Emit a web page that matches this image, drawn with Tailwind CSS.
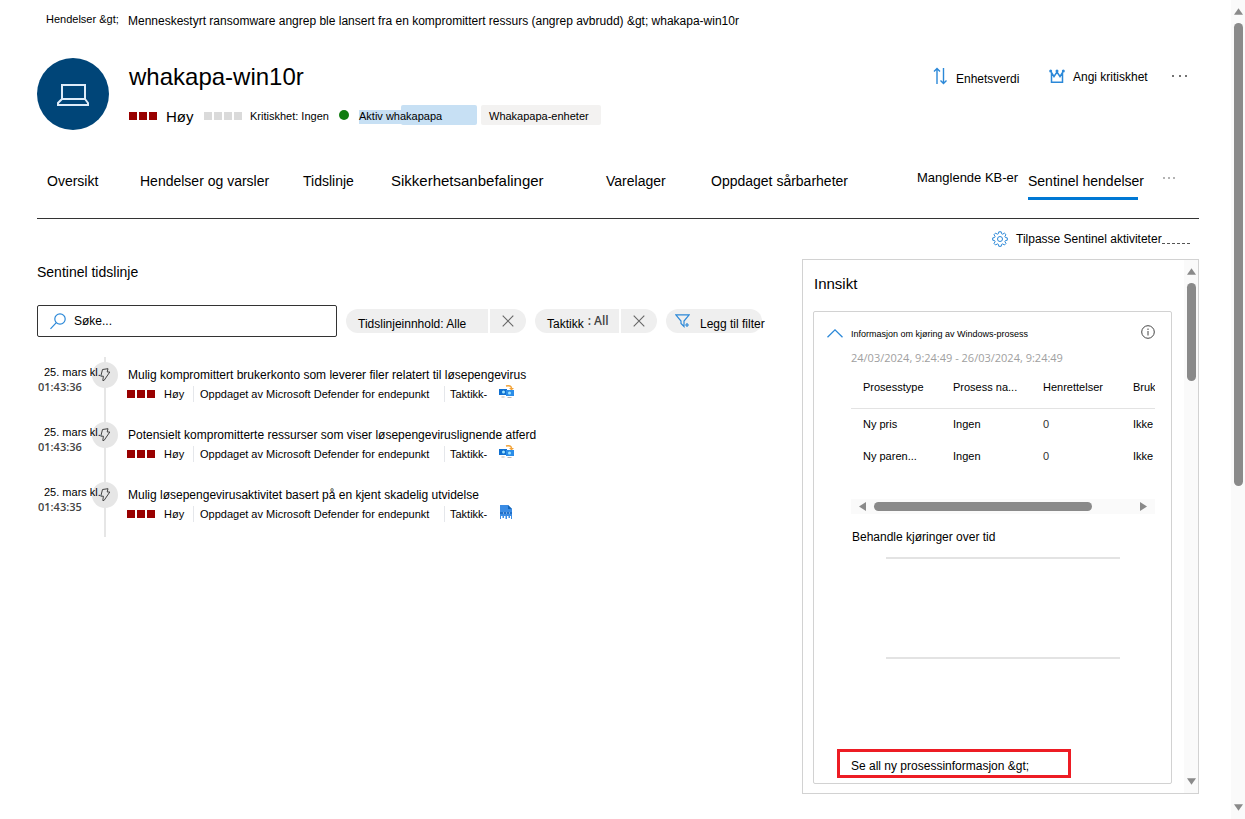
<!DOCTYPE html>
<html lang="nb">
<head>
<meta charset="utf-8">
<meta name="viewport" content="width=device-width, initial-scale=1">
<title>whakapa-win10r</title>
<script src="https://cdn.jsdelivr.net/npm/@tailwindcss/browser@4"></script>
</head>
<body class="min-h-screen flex bg-white text-black text-[12px] leading-4 font-['Liberation_Sans',Arial,sans-serif] whitespace-nowrap">
<svg class="hidden" aria-hidden="true">
  <symbol id="bolt" viewBox="0 0 12 16"><path d="M3.500 2.500l5.500-.8-.8 3.300h2.600L5 13.500H3.800l.6-4.300H1.800z" fill="none" stroke="#444" stroke-linejoin="round"/></symbol>
  <symbol id="close" viewBox="0 0 12 12"><path d="M.7.7l10.600 10.600M11.300.7L.7 11.300" stroke="#666" stroke-width="1.100"/></symbol>
  <symbol id="lateral" viewBox="0 0 16 16"><path d="M7 2q5-1 5.500 2" fill="none" stroke="#f2a33a" stroke-width="1.500"/><path d="M10 4h5l-2.500 2.500z" fill="#f2a33a"/><path d="M0 5h8v6H0z" fill="#0f6fd0"/><path d="M7 6h8v6H7z" fill="#2b8de8"/><circle cx="4.500" cy="8" r="1.500" fill="#9fe4ff"/><circle cx="10.500" cy="9" r="1.500" fill="#9fe4ff"/><path d="M2.500 12.500h3v1h-3zM8.500 13h4v1h-4z" fill="#b5b5b5"/></symbol>
  <symbol id="impact" viewBox="0 0 14 14"><path d="M1 0h8l4 4v10h-1v-3h-1v2H9.500v-2H8v3H6.500v-3H5v2H3.500v-2H2v3H1z" fill="#3b8ce4"/><path d="M9 0l4 4H9z" fill="#1566b8"/><path d="M1 8h12" stroke="#1f6fc9" stroke-width="2"/><path d="M4 8h1M7 8h1M10 8h1" stroke="#d4e8fb"/></symbol>
</svg>

<div class="flex-1 min-w-0 pl-[37px] pr-8">
  <nav aria-label="Navigasjonssti" class="flex pt-[11px] pl-[9px]">
    <a href="#" class="w-[82px] text-[11px]">Hendelser &amp;gt;</a>
    <a href="#" class="pt-0.5">Menneskestyrt ransomware angrep ble lansert fra en kompromittert ressurs (angrep avbrudd) &amp;gt; whakapa-win10r</a>
  </nav>

  <header class="mt-[29px] flex gap-5">
    <div class="size-[72px] rounded-full bg-[#004578] grid place-items-center">
      <svg width="34" height="24" viewBox="0 0 34 24" fill="none" stroke="#deecf9" stroke-width="2"><path d="M6 3h23v14H6zM6 17l-4 4v2h30v-2l-3-4"/></svg>
    </div>
    <div class="flex-1">
      <h1 class="text-[24px] leading-8 mt-[3px]">whakapa-win10r</h1>
      <div class="mt-[13px] flex items-center h-5 text-[11px]">
        <span class="flex gap-0.5"><i class="size-2 bg-[#990000]"></i><i class="size-2 bg-[#990000]"></i><i class="size-2 bg-[#990000]"></i></span>
        <span class="text-[15px] ml-[9px] w-[38px] pt-0.5">Høy</span>
        <span class="flex gap-0.5"><i class="size-2 bg-[#dadada]"></i><i class="size-2 bg-[#dadada]"></i><i class="size-2 bg-[#dadada]"></i><i class="size-2 bg-[#dadada]"></i></span>
        <span class="ml-2 w-[89px]">Kritiskhet: Ingen</span>
        <i class="-mt-0.5 size-2.5 rounded-full bg-[#107c10]"></i>
        <span class="relative -mt-0.5 ml-[10px] w-[118px] h-5 flex items-center">
          <i class="absolute left-0 top-[5px] w-11 h-[14px] bg-[#c7e0f4]"></i>
          <i class="absolute right-0 top-0 w-[76px] h-5 rounded-xs bg-[#c7e0f4]"></i>
          <span class="relative pt-0.5">Aktiv whakapapa</span>
        </span>
        <span class="-mt-0.5 ml-1 h-5 w-[120px] pl-2 pt-0.5 rounded-xs bg-[#f3f2f1] flex items-center">Whakapapa-enheter</span>
      </div>
    </div>
    <div class="flex items-start pt-[9px] pr-[10px] h-10">
      <button type="button" class="flex items-start gap-[9px]">
        <svg width="14" height="18" viewBox="0 0 14 18" fill="none" stroke="#2b88d8" stroke-width="1.400"><path d="M4 17V2M1 4.500L4 1.500l3 3M10.500 1v15M7.500 13.500l3 3 3-3"/></svg>
        <span class="pt-1 w-[93px] text-left">Enhetsverdi</span>
      </button>
      <button type="button" class="flex items-start gap-2">
        <svg class="mt-0.5" width="16" height="15" viewBox="0 0 16 15" fill="none" stroke="#2b88d8" stroke-width="1.500"><path d="M2.500 13.200V3.500L5 7.500 8 3l3 4.500 2.500-4v9.700z"/><g fill="#2b88d8" stroke="none"><circle cx="1.700" cy="2" r="1.500"/><circle cx="8" cy="2" r="1.500"/><circle cx="14.300" cy="2" r="1.500"/></g></svg>
        <span class="pt-0.5 w-[98px] text-left">Angi kritiskhet</span>
      </button>
      <button type="button" aria-label="Flere handlinger" class="pt-[7px]"><svg width="18" height="4" viewBox="0 0 18 4" fill="#444"><circle cx="2" cy="2" r="1"/><circle cx="9" cy="2" r="1"/><circle cx="15" cy="2" r="1"/></svg></button>
    </div>
  </header>

  <nav aria-label="Faner" class="mt-[41px] pl-[10px] h-12 border-b border-[#333] grid grid-cols-[93fr_163fr_88fr_215fr_105fr_206fr_111fr_134fr_37fr] text-[14px] leading-5">
    <a href="#">Oversikt</a>
    <a href="#">Hendelser og varsler</a>
    <a href="#">Tidslinje</a>
    <a href="#" class="text-[15px]">Sikkerhetsanbefalinger</a>
    <a href="#">Varelager</a>
    <a href="#">Oppdaget sårbarheter</a>
    <a href="#" class="text-[13px] -mt-[3px]">Manglende KB-er</a>
    <a href="#" aria-current="page" class="h-[29px] w-[110px] border-b-3 border-[#0078d4]">Sentinel hendelser</a>
    <button type="button" aria-label="Flere faner" class="self-start pt-[5px]"><svg width="14" height="4" viewBox="0 0 14 4" fill="#555"><circle cx="2" cy="2" r=".8"/><circle cx="7" cy="2" r=".8"/><circle cx="12" cy="2" r=".8"/></svg></button>
  </nav>

  <div class="h-10 flex items-center justify-end">
    <button type="button" class="flex items-center w-[207px]">
      <svg class="mr-2" width="16" height="16" viewBox="0 0 16 16" fill="none" stroke="#2b88d8"><path d="M6.800.8h2.400l.4 1.900 1.100.5 1.700-1.100 1.600 1.600-1.100 1.700.5 1.100 1.900.4v2.300l-1.900.4-.5 1.100 1.100 1.700-1.600 1.600-1.700-1.100-1.100.5-.4 1.900H6.800l-.4-1.900-1.100-.5-1.700 1.100L2 12.400l1.100-1.700-.5-1.100-1.900-.4V6.900l1.900-.4.5-1.100L2 3.700l1.600-1.600 1.700 1.100 1.100-.5z"/><circle cx="8" cy="8" r="2.500"/></svg>
      <span>Tilpasse Sentinel aktiviteter</span>
      <i class="h-[10px] w-7 border-b border-dashed border-[#555]"></i>
    </button>
  </div>

  <main class="flex items-start">
    <section class="flex-1 min-w-0 pt-[3px]">
      <h2 class="text-[14px] leading-5">Sentinel tidslinje</h2>
      <div class="mt-[23px] flex items-center">
        <label class="w-[300px] h-8 border border-[#333] rounded-xs flex items-center pl-3 gap-2">
          <svg width="16" height="17" viewBox="0 0 16 17" fill="none" stroke="#2b88d8" stroke-width="1.200"><circle cx="10" cy="6" r="5.200"/><path d="M6.300 9.700L.5 15.800"/></svg>
          <input type="text" aria-label="Søk" placeholder="Søke..." class="flex-1 min-w-0 outline-none placeholder:text-black">
        </label>
        <div class="ml-[9px] flex gap-0.5 h-6">
          <button type="button" class="w-[142px] pl-3 pt-1.5 text-left rounded-l-full rounded-r-xs bg-[#efefef]">Tidslinjeinnhold: Alle</button>
          <button type="button" aria-label="Fjern Tidslinjeinnhold" class="w-9 grid place-items-center rounded-r-full bg-[#efefef]"><svg width="12" height="12"><use href="#close"/></svg></button>
        </div>
        <div class="ml-[9px] flex gap-0.5 h-6">
          <button type="button" class="w-[84px] pl-3 flex gap-1 rounded-l-full rounded-r-xs bg-[#efefef]"><span class="pt-[7px]">Taktikk</span><span class="pt-1 font-['Open_Sans',sans-serif] font-semibold text-[#444]">: All</span></button>
          <button type="button" aria-label="Fjern Taktikk" class="w-9 grid place-items-center rounded-r-full bg-[#efefef]"><svg width="12" height="12"><use href="#close"/></svg></button>
        </div>
        <button type="button" class="ml-[9px] h-6 w-[96px] pl-[9px] flex items-center gap-2.5 rounded-full bg-[#efefef]">
          <svg class="shrink-0" width="15" height="14" viewBox="0 0 15 14" fill="none" stroke="#2b88d8" stroke-width="1.200"><path d="M.8.8h13.400L9 7v5.500L6 9.500V7z"/><path d="M10 11h4M12 9v4"/></svg>
          <span class="pt-1.5">Legg til filter</span>
        </button>
      </div>

      <ol class="mt-5">
        <li class="flex h-[60px]">
          <div class="relative z-10 w-[54px] pt-[7px] text-[11px]"><span class="block pl-[7px]">25. mars kl.</span><span class="block -mt-px pl-px font-semibold text-[#444] font-['Open_Sans',sans-serif]">01:43:36</span></div>
          <div class="w-[37px] flex"><div class="ml-[13px] w-0.5 bg-[#e6e6e6] flex justify-center"><span class="mt-[5px] size-[26px] shrink-0 rounded-full bg-[#e6e6e6] grid place-items-center"><svg width="12" height="16"><use href="#bolt"/></svg></span></div></div>
          <div class="pt-[10px]">
            <a href="#" class="block">Mulig kompromittert brukerkonto som leverer filer relatert til løsepengevirus</a>
            <div class="flex items-center mt-[3px] text-[11px]"><span class="flex gap-0.5 -ml-px"><i class="size-2 bg-[#990000]"></i><i class="size-2 bg-[#990000]"></i><i class="size-2 bg-[#990000]"></i></span><span class="ml-[9px] w-[29px]">Høy</span><span class="w-[251px] pl-1.5 border-l border-gray-200">Oppdaget av Microsoft Defender for endepunkt</span><span class="w-[55px] pl-[5px] border-l border-gray-200">Taktikk-</span><svg class="-mt-1" width="16" height="16"><use href="#lateral"/></svg></div>
          </div>
        </li>
        <li class="flex h-[60px]">
          <div class="relative z-10 w-[54px] pt-[7px] text-[11px]"><span class="block pl-[7px]">25. mars kl.</span><span class="block -mt-px pl-px font-semibold text-[#444] font-['Open_Sans',sans-serif]">01:43:36</span></div>
          <div class="w-[37px] flex"><div class="ml-[13px] w-0.5 bg-[#e6e6e6] flex justify-center"><span class="mt-[5px] size-[26px] shrink-0 rounded-full bg-[#e6e6e6] grid place-items-center"><svg width="12" height="16"><use href="#bolt"/></svg></span></div></div>
          <div class="pt-[10px]">
            <a href="#" class="block">Potensielt kompromitterte ressurser som viser løsepengeviruslignende atferd</a>
            <div class="flex items-center mt-[3px] text-[11px]"><span class="flex gap-0.5 -ml-px"><i class="size-2 bg-[#990000]"></i><i class="size-2 bg-[#990000]"></i><i class="size-2 bg-[#990000]"></i></span><span class="ml-[9px] w-[29px]">Høy</span><span class="w-[251px] pl-1.5 border-l border-gray-200">Oppdaget av Microsoft Defender for endepunkt</span><span class="w-[55px] pl-[5px] border-l border-gray-200">Taktikk-</span><svg class="-mt-1" width="16" height="16"><use href="#lateral"/></svg></div>
          </div>
        </li>
        <li class="flex h-[60px]">
          <div class="relative z-10 w-[54px] pt-[7px] text-[11px]"><span class="block pl-[7px]">25. mars kl.</span><span class="block -mt-px pl-px font-semibold text-[#444] font-['Open_Sans',sans-serif]">01:43:35</span></div>
          <div class="w-[37px] flex"><div class="ml-[13px] w-0.5 bg-[#e6e6e6] flex justify-center"><span class="mt-[5px] size-[26px] shrink-0 rounded-full bg-[#e6e6e6] grid place-items-center"><svg width="12" height="16"><use href="#bolt"/></svg></span></div></div>
          <div class="pt-[10px]">
            <a href="#" class="block">Mulig løsepengevirusaktivitet basert på en kjent skadelig utvidelse</a>
            <div class="flex items-center mt-[3px] text-[11px]"><span class="flex gap-0.5 -ml-px"><i class="size-2 bg-[#990000]"></i><i class="size-2 bg-[#990000]"></i><i class="size-2 bg-[#990000]"></i></span><span class="ml-[9px] w-[29px]">Høy</span><span class="w-[251px] pl-1.5 border-l border-gray-200">Oppdaget av Microsoft Defender for endepunkt</span><span class="w-[55px] pl-[5px] border-l border-gray-200">Taktikk-</span><svg class="-mt-1" width="14" height="14"><use href="#impact"/></svg></div>
          </div>
        </li>
      </ol>
    </section>

    <aside class="w-[397px] shrink-0 border border-[#d2d2d2] flex">
      <div class="flex-1 min-w-0 pl-[10px] pr-3 pb-[9px]">
        <h2 class="mt-[14px] text-[15px] leading-5 pl-px">Innsikt</h2>
        <section class="mt-[17px] border border-[#d2d2d2] rounded-xs pt-[13px] px-[13px] pb-[5px]">
          <div class="flex items-start">
            <button type="button" aria-label="Skjul" class="pt-1 w-6"><svg width="16" height="9" viewBox="0 0 16 9" fill="none" stroke="#2b88d8" stroke-width="1.300"><path d="M.5 8.300L8 .9l7.500 7.400"/></svg></button>
            <h3 class="flex-1 pt-px text-[9px]">Informasjon om kjøring av Windows-prosess</h3>
            <button type="button" aria-label="Informasjon" class="mr-[3px]"><svg width="14" height="14" viewBox="0 0 14 14" fill="none" stroke="#444"><circle cx="7" cy="7" r="6.300"/><path d="M7 6v4.500M7 3.500V5"/></svg></button>
          </div>
          <div class="pl-6 pr-[3px]">
            <p class="mt-2 text-[11px] text-[#a0a0a0] font-['Open_Sans',sans-serif]">24/03/2024, 9:24:49 - 26/03/2024, 9:24:49</p>
            <div class="mt-2 overflow-hidden">
              <table class="w-full table-fixed border-collapse text-left text-[11px]">
                <thead><tr class="h-[34px] border-b border-[#e3e3e3]"><th class="w-[102px] pl-3 pb-2 font-normal">Prosesstype</th><th class="w-[90px] pb-2 font-normal">Prosess na...</th><th class="w-[90px] pb-2 font-normal">Henrettelser</th><th class="pb-2 font-normal">Bruk</th></tr></thead>
                <tbody>
                  <tr class="h-8"><td class="pl-3">Ny pris</td><td>Ingen</td><td class="text-[#323130]">0</td><td>Ikke</td></tr>
                  <tr class="h-8"><td class="pl-3">Ny paren...</td><td>Ingen</td><td class="text-[#323130]">0</td><td>Ikke</td></tr>
                </tbody>
              </table>
            </div>
            <div class="mt-[27px] h-[15px] bg-[#fafafa] flex items-center pl-2 pr-2">
              <svg width="7" height="9" viewBox="0 0 7 9" fill="#8a8a8a"><path d="M7 0v9L0 4.500z"/></svg>
              <div class="flex-1 mx-2"><div class="w-[218px] h-[9px] rounded-full bg-[#8a8a8a]"></div></div>
              <svg width="7" height="9" viewBox="0 0 7 9" fill="#8a8a8a"><path d="M0 0v9l7-4.500z"/></svg>
            </div>
            <h4 class="mt-[15px] pl-px">Behandle kjøringer over tid</h4>
            <div class="mt-3 ml-[35px] mr-[35px] h-[102px] border-y-2 border-[#e3e3e3]"></div>
            <a href="#" class="mt-[90px] -ml-[14px] block w-[234px] h-[29px] border-3 border-[#ed1c24] pl-[11px] pt-1.5">Se all ny prosessinformasjon &amp;gt;</a>
          </div>
        </section>
      </div>
      <div class="w-[14px] bg-[#fafafa] flex flex-col items-center py-2">
        <svg width="9" height="7" viewBox="0 0 10 7" fill="#8a8a8a"><path d="M0 7h10L5 0z"/></svg>
        <div class="mt-2 h-[98px] w-[9px] rounded-full bg-[#8a8a8a]"></div>
        <svg class="mt-auto" width="9" height="7" viewBox="0 0 10 7" fill="#8a8a8a"><path d="M0 0h10L5 7z"/></svg>
      </div>
    </aside>
  </main>
</div>

<div class="w-[14px] shrink-0 bg-[#fafafa] flex flex-col items-center py-2">
  <svg width="9" height="7" viewBox="0 0 10 7" fill="#8a8a8a"><path d="M0 7h10L5 0z"/></svg>
  <div class="mt-2 h-[463px] w-[9px] rounded-full bg-[#8a8a8a]"></div>
  <svg class="mt-auto" width="9" height="7" viewBox="0 0 10 7" fill="#8a8a8a"><path d="M0 0h10L5 7z"/></svg>
</div>
</body>
</html>
